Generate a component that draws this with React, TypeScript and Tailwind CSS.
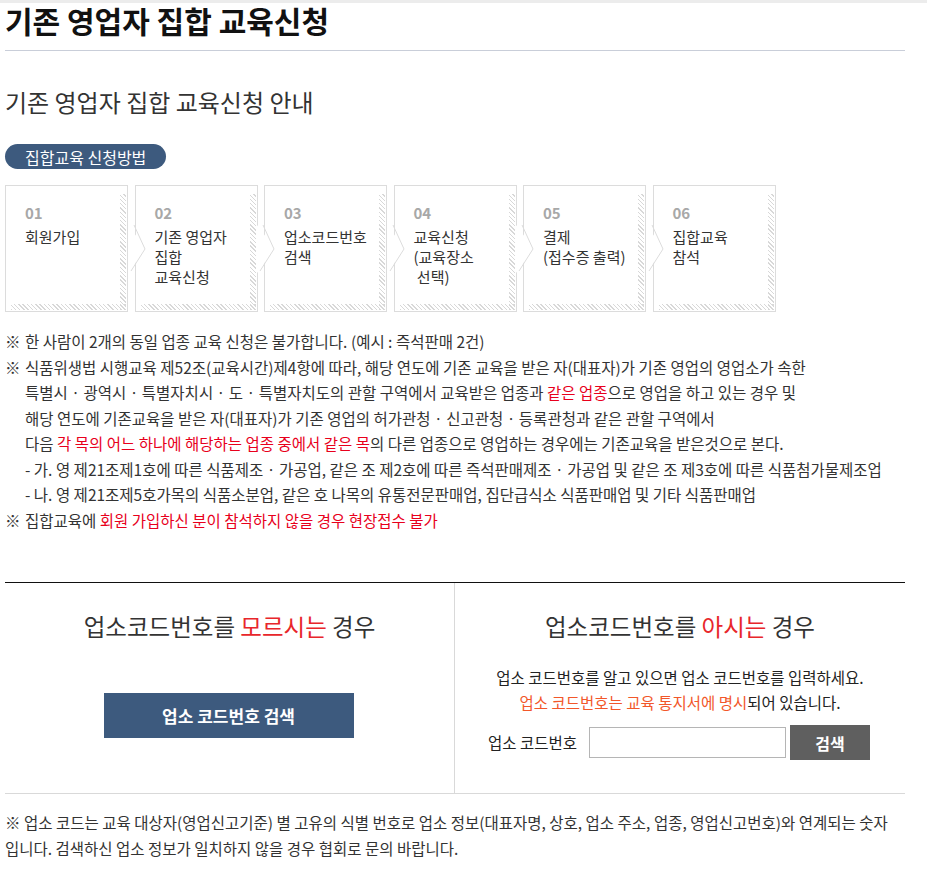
const font = { fontFamily: '"Noto Sans CJK KR", "Noto Sans", sans-serif' };

const steps = [
  { no: "01", label: ["회원가입"] },
  { no: "02", label: ["기존 영업자", "집합", "교육신청"] },
  { no: "03", label: ["업소코드번호", "검색"] },
  { no: "04", label: ["교육신청", "(교육장소", " 선택)"] },
  { no: "05", label: ["결제", "(접수증 출력)"] },
  { no: "06", label: ["집합교육", "참석"] },
];

const hatch =
  "bg-[repeating-linear-gradient(45deg,#d8d8d8_0px,#d8d8d8_1px,transparent_1px,transparent_3px)]";

function StepBox({ no, label, first }: { no: string; label: string[]; first?: boolean }) {
  return (
    <div className="relative w-[123px] h-[127px] border border-[#dcdcdc] bg-white pl-[19px] pt-[17px]">
      {/* hatched edges */}
      <div className={`absolute right-[1px] top-[8px] bottom-[1px] w-[6px] ${hatch}`} />
      <div className={`absolute left-[5px] right-[1px] bottom-[1px] h-[6px] ${hatch}`} />
      {!first && (
        <svg
          className="absolute left-[-8px] top-[39px]"
          width="20"
          height="48"
          viewBox="0 0 20 48"
        >
          <polygon points="0,0 18,24 0,48" fill="white" />
          <polyline points="6,0 17,24 3,46" fill="none" stroke="#dcdcdc" strokeWidth="1" />
        </svg>
      )}
      <div className="relative text-[15px] font-bold text-[#a8a8a8] leading-[20px]">{no}</div>
      <div className="relative mt-[4px] text-[15px] text-[#333] leading-[20px] whitespace-pre">
        {label.map((l, i) => (
          <div key={i}>{l}</div>
        ))}
      </div>
    </div>
  );
}

function Red({ children }: { children: React.ReactNode }) {
  return <span className="text-[#e8001c]">{children}</span>;
}

export default function App() {
  return (
    <div style={font} className="w-[927px] min-h-[876px] bg-white text-[#222]">
      <div className="h-[3px] bg-[#ececec]" />
      <div className="pl-[5px] w-[905px]">
        {/* Page title */}
        <h1 className="text-[30px] font-bold leading-[34px] text-[#111]">
          기존 영업자 집합 교육신청
        </h1>
        <div className="mt-[13px] h-px bg-[#c9ced9]" />

        <h2 className="mt-[37px] text-[24px] leading-[28px] text-[#333]">
          기존 영업자 집합 교육신청 안내
        </h2>

        <div className="mt-[28px] inline-flex items-center h-[25px] px-[20px] rounded-full bg-[#3d5a7e] text-white text-[16px]">
          집합교육 신청방법
        </div>

        {/* Steps */}
        <div className="mt-[16px] flex gap-[6.5px]">
          {steps.map((s, i) => (
            <StepBox key={s.no} no={s.no} label={s.label} first={i === 0} />
          ))}
        </div>

        {/* Notes */}
        <div className="mt-[17px] text-[15.5px] leading-[25.5px] text-[#333]">
          <div className="flex">
            <span className="w-[20px] shrink-0">※</span>
            <span>한 사람이 2개의 동일 업종 교육 신청은 불가합니다. (예시 : 즉석판매 2건)</span>
          </div>
          <div className="flex">
            <span className="w-[20px] shrink-0">※</span>
            <div>
              <div>식품위생법 시행교육 제52조(교육시간)제4항에 따라, 해당 연도에 기존 교육을 받은 자(대표자)가 기존 영업의 영업소가 속한</div>
              <div>
                특별시 · 광역시 · 특별자치시 · 도 · 특별자치도의 관할 구역에서 교육받은 업종과 <Red>같은 업종</Red>으로 영업을 하고 있는 경우 및
              </div>
              <div>해당 연도에 기존교육을 받은 자(대표자)가 기존 영업의 허가관청 · 신고관청 · 등록관청과 같은 관할 구역에서</div>
              <div>
                다음 <Red>각 목의 어느 하나에 해당하는 업종 중에서 같은 목</Red>의 다른 업종으로 영업하는 경우에는 기존교육을 받은것으로 본다.
              </div>
              <div className="whitespace-nowrap">- 가. 영 제21조제1호에 따른 식품제조 · 가공업, 같은 조 제2호에 따른 즉석판매제조 · 가공업 및 같은 조 제3호에 따른 식품첨가물제조업</div>
              <div>- 나. 영 제21조제5호가목의 식품소분업, 같은 호 나목의 유통전문판매업, 집단급식소 식품판매업 및 기타 식품판매업</div>
            </div>
          </div>
          <div className="flex">
            <span className="w-[20px] shrink-0">※</span>
            <span>
              집합교육에 <Red>회원 가입하신 분이 참석하지 않을 경우 현장접수 불가</Red>
            </span>
          </div>
        </div>

        {/* Search section */}
        <div className="mt-[49px] border-t border-[#111] border-b border-b-[#d9d9d9] grid grid-cols-2">
          <div className="border-r border-[#d9d9d9] h-[210px] flex flex-col items-center pt-[27px]">
            <h3 className="text-[23.5px] leading-[32px] text-[#333]">
              업소코드번호를 <span className="text-[#e8262b]">모르시는</span> 경우
            </h3>
            <button className="mt-[51px] w-[250px] h-[45px] bg-[#3d5a7e] text-white text-[17px] font-bold ml-[-2px]">
              업소 코드번호 검색
            </button>
          </div>
          <div className="h-[210px] flex flex-col items-center pt-[27px]">
            <h3 className="text-[23.5px] leading-[32px] text-[#333]">
              업소코드번호를 <span className="text-[#e8262b]">아시는</span> 경우
            </h3>
            <p className="mt-[23px] text-[15.5px] leading-[25px] text-[#222]">
              업소 코드번호를 알고 있으면 업소 코드번호를 입력하세요.
            </p>
            <p className="text-[15.5px] leading-[25px] text-[#222]">
              <span className="text-[#f2572a]">업소 코드번호는 교육 통지서에 명시</span>되어 있습니다.
            </p>
            <div className="mt-[10px] flex items-center ml-[-2px]">
              <span className="text-[15.5px] text-[#222]">업소 코드번호</span>
              <input className="ml-[12px] w-[197px] h-[31px] border border-[#b5b5b5] outline-none" />
              <button className="ml-[4px] w-[80px] h-[35px] bg-[#5f5f5f] text-white text-[16px] font-bold">
                검색
              </button>
            </div>
          </div>
        </div>

        <p className="mt-[15px] text-[15.5px] leading-[26px] text-[#333]">
          ※ 업소 코드는 교육 대상자(영업신고기준) 별 고유의 식별 번호로 업소 정보(대표자명, 상호, 업소 주소, 업종, 영업신고번호)와 연계되는 숫자 입니다. 검색하신 업소 정보가 일치하지 않을 경우 협회로 문의 바랍니다.
        </p>
      </div>
    </div>
  );
}
